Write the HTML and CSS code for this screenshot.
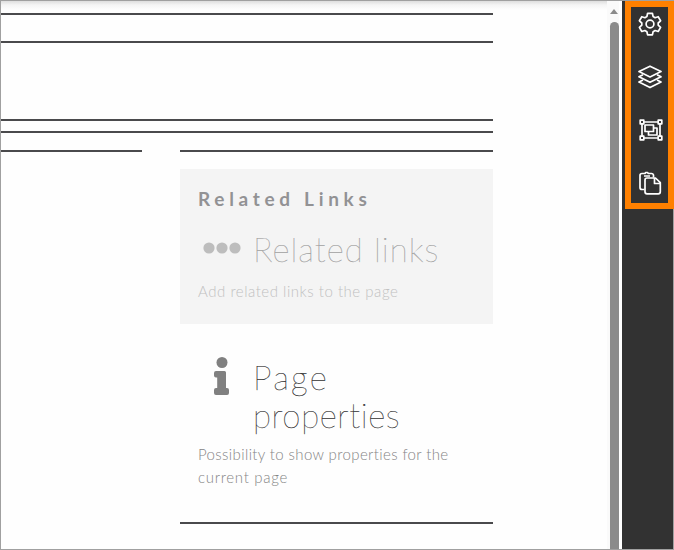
FILE: index.html
```html
<!DOCTYPE html>
<html lang="en">
<head>
<meta charset="utf-8">
<title>Page editor</title>
<link rel="stylesheet" href="styles.css">
</head>
<body>
<div class="window">
  <main class="page">
    <div class="rule rule-first"></div>
    <div class="rule rule-header"></div>
    <div class="rule rule-nav"></div>
    <div class="rule rule-sub"></div>
    <div class="columns">
      <div class="column-left"></div>
      <section class="column-right">
        <article class="block block-disabled">
          <h2 class="section-title">Related Links</h2>
          <div class="heading">
            <svg class="icon-dots" width="38" height="12" viewBox="0 0 38 12" fill="#bdbdbd"><circle cx="6" cy="6" r="5.6"/><circle cx="19" cy="6" r="5.6"/><circle cx="32" cy="6" r="5.6"/></svg>
            <h3 class="title title-related">Related links</h3>
          </div>
          <p class="text text-related">Add related links to the page</p>
        </article>
        <article class="block block-props">
          <div class="heading">
            <svg class="icon-info" width="15" height="39" viewBox="0 0 15 39" fill="#808080"><circle cx="8" cy="5.5" r="5.5"/><path d="M2 14h8.500q1.500 0 1.500 1.500V31h1q2 0 2 2v3q0 2-2 2H2q-2 0-2-2v-3q0-2 2-2h1.200V20.500H2q-2 0-2-2V16q0-2 2-2z"/></svg>
            <h3 class="title title-props"><span class="word-page">Page</span><br>properties</h3>
          </div>
          <p class="text text-props">Possibility to show properties for the<br><span class="text-second">current page</span></p>
        </article>
      </section>
    </div>
  </main>
  <div class="scrollbar">
    <div class="arrow"></div>
    <div class="thumb"></div>
  </div>
  <aside class="sidebar">
    <nav class="tools">
      <svg width="24" height="24" viewBox="0 0 24 24"><path d="M9.600 1.300h4.800l.7 3.200 2 1.200 3.100-1 2.400 4.100-2.400 2.200v2.200l2.400 2.200-2.400 4.100-3.100-1-2 1.200-.7 3.200H9.600l-.7-3.200-2-1.200-3.100 1-2.400-4.100 2.400-2.200V11L1.400 8.800l2.400-4.100 3.100 1 2-1.200z"/><circle cx="12" cy="12" r="3.900"/></svg>
      <svg width="24" height="24" viewBox="0 0 24 24"><path d="M12 1.200 23 6.600 12 12 1 6.600z"/><path d="M5 9.700 1 11.800l11 5.500 11-5.500-4-2.100"/><path d="M5 14.900 1 17l11 5.600L23 17l-4-2.100"/></svg>
      <svg class="tool-group" width="24" height="24" viewBox="0 0 24 24"><path d="M4 4h16M4 20h16M3 6v12M21 6v12"/><path d="M1.200 2.200h3.600v3.600H1.200zM19.200 2.200h3.600v3.600h-3.600zM1.200 18.200h3.600v3.600H1.200zM19.200 18.200h3.600v3.600h-3.600z"/><path d="M6 7h8.500v6.500H6z"/><path d="M14.500 10H18v7H9.500v-3.500"/></svg>
      <svg width="24" height="24" viewBox="0 0 24 24"><path d="M6.500 18.500H4q-2 0-2-2v-12q0-2 2-2h3l.7-1h1.800l.8 1h3.200q1.500 0 2 1.500v2.500M6 5h6"/><path d="M9 7h8.500l4.800 4.700v9.100q0 2-2 2H9q-2 0-2-2V9q0-2 2-2zM16.500 7v5.500h5.500"/></svg>
    </nav>
  </aside>
</div>
</body>
</html>
```
FILE: styles.css
```css
* { box-sizing: border-box; }
body { margin: 0; background: #fff; font-family: Lato, "Liberation Sans", sans-serif; }
.window { display: flex; width: 674px; height: 550px; border: 1px solid #a0a0a0; background: #fefefe; }
.page { width: 606px; height: 548px; background: linear-gradient(#dedede, #f5f5f5 4px, #fefefe 9px); overflow: hidden; }
.rule { width: 492px; height: 2px; background: #4a4a4c; }
.rule-first { margin-top: 12px; }
.rule-header { margin-top: 26px; }
.rule-nav { margin-top: 76px; }
.rule-sub { margin-top: 10px; }
.columns { display: flex; width: 492px; margin-top: 17px; }
.column-left { width: 141px; height: 2px; margin-right: 38px; background: #4a4a4c; }
.column-right { width: 313px; height: 374px; border-top: 2px solid #4a4a4c; border-bottom: 2px solid #4a4a4c; padding-top: 17px; }
.block { padding: 0 18px; }
.block-disabled { height: 155px; padding-top: 18px; background: #f4f4f4; color: #c1c1c1; }
.block-props { padding-top: 34px; }
h2, h3, p { margin: 0; white-space: nowrap; }
.section-title { color: #929294; font-size: 19px; line-height: 24px; font-weight: 700; letter-spacing: 4.700px; }
.heading { display: flex; }
.icon-dots { margin: 31px 12px 0 5px; flex: none; }
.icon-info { margin: -1px 24px 0 16px; flex: none; }
.title { font-weight: 100; font-size: 33px; line-height: 38px; }
.title-related { margin-top: 19px; letter-spacing: 1px; color: #a0a0a0; -webkit-text-stroke: .25px #a0a0a0; }
.title-props { color: #303030; letter-spacing: .6px; -webkit-text-stroke: .25px #303030; }
.word-page { letter-spacing: 2.300px; }
.text { font-size: 15px; line-height: 23px; font-weight: 300; }
.text-related { margin-top: 12px; letter-spacing: .53px; }
.text-props { color: #858585; margin-top: 9px; letter-spacing: .38px; }
.text-second { letter-spacing: .7px; }
.scrollbar { width: 15px; height: 548px; background: linear-gradient(90deg, #fafafa 12px, #fff 12px); padding: 8px 0 0 3px; overflow: hidden; }
.arrow { width: 0; height: 0; border: 4.5px solid transparent; border-top: 0; border-bottom: 5px solid #8b8b8b; }
.thumb { width: 9px; height: 535px; margin-top: 8px; border-radius: 5px 5px 0 0; background: #8b8b8b; }
.sidebar { width: 51px; background: #323232; padding-left: 3px; }
.tools { width: 49px; height: 208px; border: 6px solid #ff8000; position: relative; display: flex; flex-direction: column; align-items: center; gap: 29px; padding-top: 5px; }
.tools svg { flex: none; fill: none; stroke: #fff; stroke-width: 1.7; stroke-linejoin: round; }
.tool-group { margin-left: 3px; }
```
